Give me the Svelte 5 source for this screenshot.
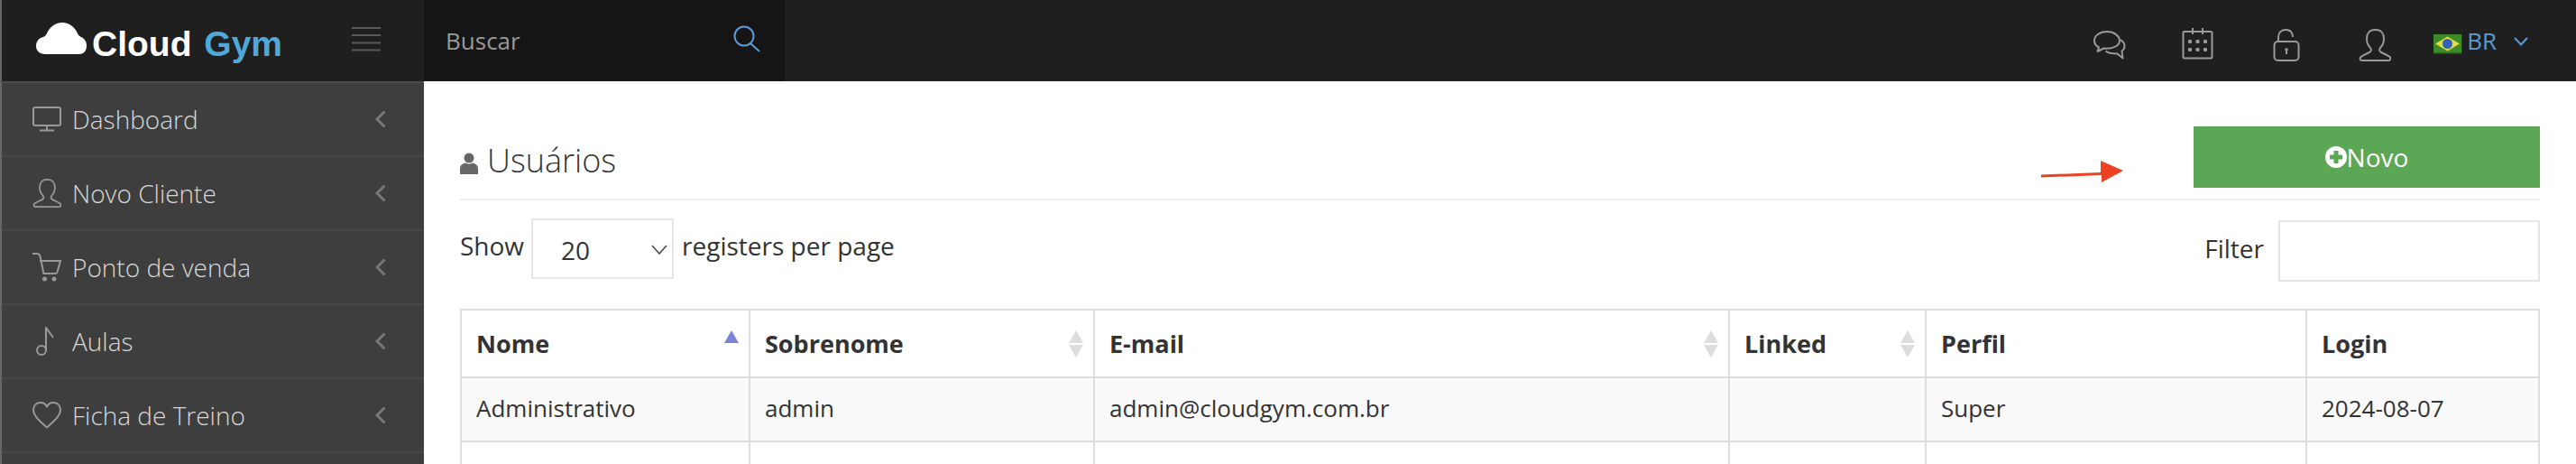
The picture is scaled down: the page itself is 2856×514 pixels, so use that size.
<script>
  const menu = ["Dashboard", "Novo Cliente", "Ponto de venda", "Aulas", "Ficha de Treino", ""];
  const columns = [
    { label: "Nome", width: 320, sort: "asc" },
    { label: "Sobrenome", width: 382, sort: "both" },
    { label: "E-mail", width: 704, sort: "both" },
    { label: "Linked", width: 218, sort: "both" },
    { label: "Perfil", width: 422 },
    { label: "Login" }
  ];
  const rows = [
    ["Administrativo", "admin", "admin@cloudgym.com.br", "", "Super", "2024-08-07"],
    ["Alex", "silva", "alexandre@cloudgym.com.br", "", "Admin", "2024-08-07"]
  ];
</script>

<div class="page">
  <!-- TOP BAR -->
  <header class="topbar">
    <div class="brand">
      <svg class="cloud" width="56" height="36" viewBox="0 0 56 36">
        <path d="M10 35C4 35 0 31 0 26c0-5 3-9 8-10 2-1 3-2 4-4C15 5 21 0 29 0c8 0 14 5 17 12 1 2 2 3 4 4 4 2 6 5 6 10 0 5-3 9-8 9z" fill="#fff"/>
      </svg>
      <span class="logo">Cloud <b>Gym</b></span>
      <svg class="burger" width="32" height="28" viewBox="0 0 32 28">
        <path d="M0 1h32M0 9h32M0 17.500h32M0 25.500h32" stroke="#5a5a5a" stroke-width="2"/>
      </svg>
    </div>
    <div class="search">
      <span>Buscar</span>
      <svg width="30" height="30" viewBox="0 0 30 30" fill="none" stroke="#5b9bd5" stroke-width="2">
        <circle cx="12" cy="12" r="10.500"/>
        <path d="M19 20l10 9"/>
      </svg>
    </div>
    <div class="tools">
      <svg width="36" height="34" viewBox="0 0 36 34" fill="none" stroke="#999" stroke-width="2" stroke-linejoin="round">
        <path d="M15 2C7 2 1 6.500 1 12c0 3 2 6 5 7.500L4.500 24l7-3.500c1 .2 2.500.3 3.500.3 8 0 14-3.800 14-8.800S23 2 15 2z"/>
        <path d="M30 11c3 2 4.500 4 4.500 7 0 2.500-1 4-3 5.500l1 8-6-5c-5 0-10-.5-13-3"/>
      </svg>
      <svg class="cal" width="36" height="36" viewBox="0 0 36 36" fill="none" stroke="#999" stroke-width="2">
        <rect x="1.500" y="5" width="32" height="29.500" rx="1.500"/>
        <path d="M12 1v7M23 1v7"/>
        <g fill="#999" stroke="none">
          <rect x="7" y="14" width="4" height="4" rx="1"/><rect x="15.500" y="14" width="4" height="4" rx="1"/><rect x="24" y="14" width="4" height="4" rx="1"/>
          <rect x="7" y="23" width="4" height="4" rx="1"/><rect x="15.500" y="23" width="4" height="4" rx="1"/><rect x="24" y="23" width="4" height="4" rx="1"/>
        </g>
      </svg>
      <svg width="30" height="36" viewBox="0 0 30 36" fill="none" stroke="#999" stroke-width="2">
        <rect x="1.500" y="14" width="27" height="21" rx="4"/>
        <path d="M6 14V9c0-5 3.500-8 8-8 4.500 0 7.500 2.500 8 7v1"/>
        <path d="M15 23v5" stroke-width="2"/>
        <circle cx="15" cy="23" r="1.800" fill="#999" stroke="none"/>
      </svg>
      <svg width="36" height="36" viewBox="0 0 36 36" fill="none" stroke="#999" stroke-width="2" stroke-linejoin="round">
        <path d="M18 1c-6 0-9 4.500-9 10 0 4 2 8 4 10 1.500 2 1 4-1 5-3 1.500-7 3-9.500 5-1.500 1.500-1 4 1 4h30c2 0 2.500-2.500 1-4-2.500-2-6.500-3.500-9.500-5-2-1-2.500-3-1-5 2-2 4-6 4-10 0-5.500-3-10-9-10z"/>
      </svg>
      <div class="lang">
        <svg class="flag" width="32" height="22" viewBox="0 0 32 22">
          <rect width="32" height="22" fill="#1c4a12"/>
          <rect x="0" y="0" width="31" height="20.500" fill="#3d8a2b"/>
          <path d="M15.500 2.500L29 10.500 15.500 18.500 2 10.500z" fill="#e3dc3d"/>
          <circle cx="15.500" cy="10.500" r="5.500" fill="#2f62b5"/>
        </svg>
        <span>BR</span>
        <svg class="caret" width="16" height="10" viewBox="0 0 16 10" fill="none" stroke="#5b9bd5" stroke-width="2">
          <path d="M1 1l7 7.500L15 1"/>
        </svg>
      </div>
    </div>
  </header>

  <div class="body">
    <!-- SIDEBAR -->
    <nav class="sidebar">
      {#each menu as item, i}
        <div class="item">
          <span class="ico">
            {#if i === 0}
              <svg width="32" height="28" viewBox="0 0 32 28" fill="none" stroke="#999" stroke-width="2">
                <rect x="1" y="1" width="30" height="20" rx="2"/>
                <path d="M16 21v5M8 26.500h16"/>
              </svg>
            {:else if i === 1}
              <svg width="32" height="34" viewBox="0 0 36 36" fill="none" stroke="#999" stroke-width="2" stroke-linejoin="round">
                <path d="M18 1c-6 0-9 4.500-9 10 0 4 2 8 4 10 1.500 2 1 4-1 5-3 1.500-7 3-9.500 5-1.500 1.500-1 4 1 4h30c2 0 2.500-2.500 1-4-2.500-2-6.500-3.500-9.500-5-2-1-2.500-3-1-5 2-2 4-6 4-10 0-5.500-3-10-9-10z"/>
              </svg>
            {:else if i === 2}
              <svg width="32" height="32" viewBox="0 0 32 32" fill="none" stroke="#999" stroke-width="2">
                <path d="M0 1h5c2 0 3 1 3.500 3l4 19h14M8 9h23l-4 14"/>
                <g fill="#999" stroke="none"><circle cx="13.500" cy="29" r="2.500"/><circle cx="24" cy="29" r="2.500"/></g>
              </svg>
            {:else if i === 3}
              <svg width="32" height="32" viewBox="0 0 32 32" fill="none" stroke="#999" stroke-width="2">
                <circle cx="10" cy="26" r="5"/>
                <path d="M15 26V1l8 11"/>
              </svg>
            {:else if i === 4}
              <svg width="32" height="30" viewBox="0 0 32 30" fill="none" stroke="#999" stroke-width="2" stroke-linejoin="round">
                <path d="M16 28.500C9 22 1 16 1 9c0-5 3.500-8 8-8 3 0 5.500 1.500 7 4.500C17.500 2.500 20 1 23 1c4.500 0 8 3 8 8 0 7-8 13-15 19.500z"/>
              </svg>
            {/if}
          </span>
          <span class="label">{item}</span>
          {#if item}
            <svg class="chev" width="12" height="20" viewBox="0 0 12 20" fill="none" stroke="#777" stroke-width="3">
              <path d="M10.500 1.500L2 10l8.500 8.500"/>
            </svg>
          {/if}
        </div>
      {/each}
    </nav>

    <!-- CONTENT -->
    <main class="content">
      <div class="titlebar">
        <h1>
          <svg width="20" height="24" viewBox="0 0 20 24" fill="#666">
            <circle cx="10" cy="6" r="5.500"/>
            <path d="M0 24v-6c0-4 3-6 6-6.500 2.500 1.500 5.500 1.500 8 0 3 .5 6 2.500 6 6.500v6z"/>
          </svg>
          Usuários
        </h1>
        <button class="novo">
          <svg width="24" height="24" viewBox="0 0 24 24">
            <circle cx="12" cy="12" r="12" fill="#fff"/>
            <path d="M12 5v14M5 12h14" stroke="#5ca755" stroke-width="5"/>
          </svg>Novo
        </button>
        <svg class="arrow" width="92" height="26" viewBox="0 0 92 26">
          <path d="M0 16.500l66-2.500V1l25 11-24 13v-8L0 19.500z" fill="#ee4023"/>
        </svg>
      </div>

      <div class="controls">
        <div class="show">
          <span class="lbl">Show</span>
          <div class="select"><span>20</span>
            <svg width="18" height="11" viewBox="0 0 18 11" fill="none" stroke="#444" stroke-width="1.500"><path d="M1 1l8 9 8-9"/></svg>
          </div>
          <span class="lbl">registers per page</span>
        </div>
        <div class="filter">
          <span class="lbl">Filter</span>
          <div class="input"></div>
        </div>
      </div>

      <table>
        <colgroup>
          {#each columns as col}
            <col style={col.width ? `width:${col.width}px` : ""} />
          {/each}
        </colgroup>
        <thead>
          <tr>
            {#each columns as col}
              <th>
                <div class="th">
                  {col.label}
                  {#if col.sort}
                    <span class="sort">
                      <i class="up" class:on={col.sort === "asc"}></i>
                      {#if col.sort === "both"}<i class="down"></i>{/if}
                    </span>
                  {/if}
                </div>
              </th>
            {/each}
          </tr>
        </thead>
        <tbody>
          {#each rows as row, r}
            <tr class:odd={r === 0}>
              {#each row as cell}<td>{cell}</td>{/each}
            </tr>
          {/each}
        </tbody>
      </table>
    </main>
  </div>
</div>

<style>
  :global(body) {
    margin: 0;
    overflow: hidden;
    background: #fff;
  }

  .page {
    width: 2856px;
    height: 514px;
    overflow: hidden;
    font-family: "Open Sans", sans-serif;
    font-size: 26px;
    color: #333;
  }

  /* TOP BAR */
  .topbar {
    display: flex;
    height: 90px;
    background: #1f1f1f;
  }
  .brand {
    width: 470px;
    box-sizing: border-box;
    border-left: 2px solid #666;
    display: flex;
    align-items: center;
    padding-left: 38px;
  }
  .cloud {
    margin-top: -4px;
    flex-shrink: 0;
  }
  .logo {
    font-family: "Liberation Sans", sans-serif;
    font-weight: 700;
    font-size: 39px;
    color: #fff;
    margin-left: 6px;
    margin-top: 7px;
  }
  .logo b {
    color: #4fa8d8;
    margin-left: 3px;
  }
  .burger {
    margin-left: 77px;
    margin-top: -2px;
  }
  .search {
    width: 400px;
    box-sizing: border-box;
    background: #151515;
    display: flex;
    align-items: center;
    justify-content: space-between;
    padding: 0 27px 0 24px;
    color: #999;
  }
  .search svg {
    margin-top: -4px;
  }
  .tools {
    margin-left: auto;
    display: flex;
    align-items: center;
    padding-right: 53px;
    color: #5b9bd5;
  }
  .tools > svg {
    margin-top: 10px;
    margin-right: 62px;
  }
  .tools > .cal {
    margin-top: 6px;
    margin-right: 65px;
  }
  .tools > svg:nth-child(3) {
    margin-right: 65px;
  }
  .tools > svg:nth-child(4) {
    margin-right: 47px;
  }
  .lang {
    display: flex;
    align-items: center;
    font-size: 26px;
  }
  .flag {
    margin: 8px 5px 0 0;
  }
  .caret {
    margin: 2px 0 0 19px;
  }

  /* SIDEBAR + CONTENT */
  .body {
    display: flex;
    height: 424px;
  }
  .sidebar {
    width: 470px;
    flex-shrink: 0;
    box-sizing: border-box;
    background: #3e3e3e;
    border-left: 2px solid #666;
    border-top: 2px solid #4c4c4c;
  }
  .item {
    display: flex;
    align-items: center;
    height: 80px;
    border-bottom: 2px solid #474747;
    padding: 0 42px 0 34px;
    color: #d8d8d8;
    font-weight: 300;
    font-size: 28px;
  }
  .ico {
    width: 44px;
    display: flex;
    flex-shrink: 0;
  }
  .chev {
    margin-left: auto;
  }

  .content {
    flex: 1;
    min-width: 0;
    padding: 50px 40px 0;
  }
  .titlebar {
    position: relative;
    display: flex;
    justify-content: space-between;
    align-items: flex-end;
    height: 80px;
    border-bottom: 2px solid #eee;
  }
  h1 {
    margin: 0 0 17px;
    font-weight: 300;
    font-size: 36px;
    line-height: 50px;
    color: #333;
    display: flex;
    align-items: center;
    gap: 10px;
  }
  h1 svg {
    margin-top: 6px;
  }
  .novo {
    width: 384px;
    height: 68px;
    margin-bottom: 12px;
    background: #5ca755;
    border: none;
    color: #fff;
    font-family: inherit;
    font-size: 28px;
    display: flex;
    align-items: center;
    justify-content: center;
    padding: 0;
  }
  /* red annotation arrow laid over the page */
  .arrow {
    position: absolute;
    left: 1753px;
    top: 37px;
  }

  .controls {
    display: flex;
    justify-content: space-between;
    align-items: flex-start;
    margin-top: 20px;
    font-size: 28px;
  }
  .show, .filter {
    display: flex;
    align-items: center;
  }
  .lbl {
    margin-bottom: 7px;
  }
  .select {
    width: 158px;
    height: 67px;
    box-sizing: border-box;
    border: 2px solid #e5e5e5;
    margin: 0 9px 0 8px;
    display: flex;
    align-items: center;
    justify-content: space-between;
    padding: 2px 5px 0 31px;
  }
  .filter {
    margin-top: 2px;
  }
  .input {
    width: 290px;
    height: 68px;
    box-sizing: border-box;
    border: 2px solid #e5e5e5;
    margin-left: 16px;
  }

  table {
    width: 2306px;
    margin-top: 30px;
    table-layout: fixed;
    border-collapse: collapse;
    border: 2px solid #ddd;
  }
  th, td {
    border: 2px solid #ddd;
    text-align: left;
    padding: 0 16px;
    box-sizing: border-box;
  }
  th {
    height: 75px;
    font-weight: 700;
    font-size: 27px;
    padding: 0;
  }
  .th {
    display: flex;
    align-items: center;
    justify-content: space-between;
    height: 73px;
    padding: 0 3px 0 16px;
  }
  .sort {
    display: flex;
    flex-direction: column;
    gap: 2px;
    align-self: flex-start;
    margin-top: 22px;
    margin-right: 8px;
  }
  .sort i {
    display: block;
    width: 0;
    height: 0;
    border-left: 8px solid transparent;
    border-right: 8px solid transparent;
  }
  .up {
    border-bottom: 14px solid #ddd;
  }
  .up.on {
    border-bottom-color: #7b83d6;
  }
  .down {
    border-top: 14px solid #ddd;
  }
  td {
    height: 71px;
    padding-bottom: 3px;
  }
  .odd td {
    background: #f9f9f9;
  }
</style>
